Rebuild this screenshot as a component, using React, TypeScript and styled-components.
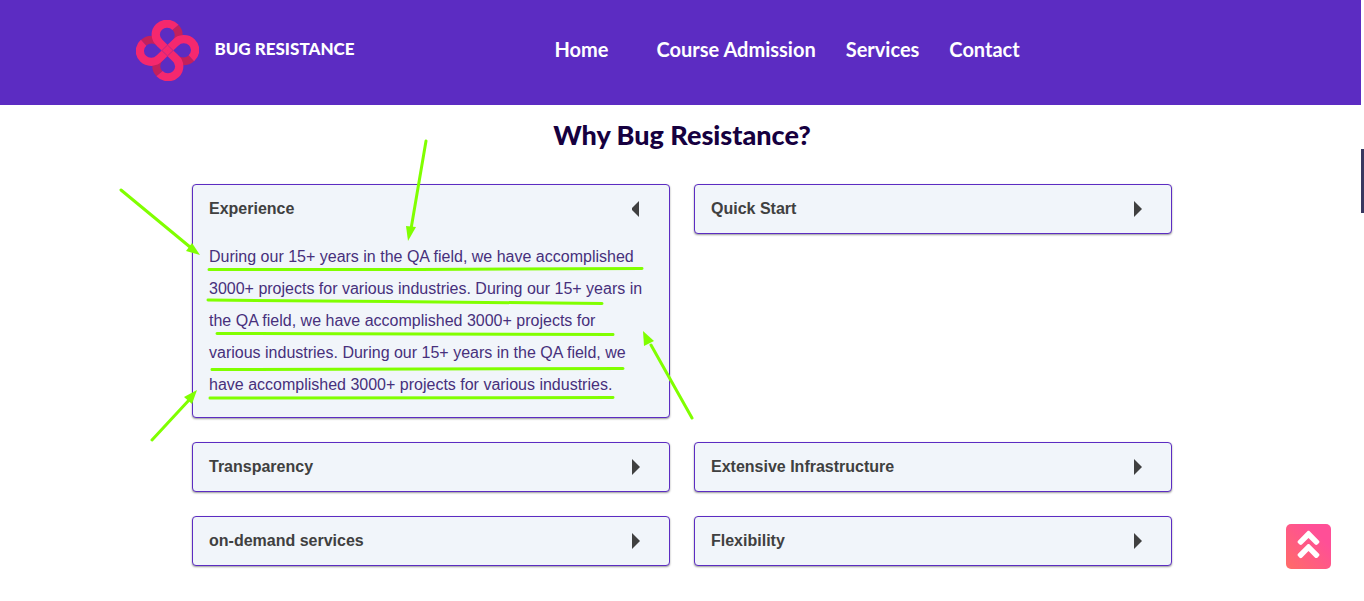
import React, { useState } from "react";
import styled, { createGlobalStyle } from "styled-components";
import { FaAngleDoubleUp } from "react-icons/fa";

const GlobalStyle = createGlobalStyle`
  *, *::before, *::after { box-sizing: border-box; }
  body {
    margin: 0;
    background: #fff;
    font-family: "Liberation Sans", Arial, sans-serif;
  }
`;

const Header = styled.header`
  display: flex;
  align-items: center;
  height: 105px;
  padding: 0 10% 4px;
  background: #5c2cc2;
`;

const Brand = styled.a`
  display: flex;
  align-items: center;
  gap: 15px;
  color: #fff;
  font: 900 17px/24px Lato, sans-serif;
  text-decoration: none;
  white-space: nowrap;
`;

const BrandName = styled.span`
  padding-bottom: 4px;
`;

const Nav = styled.nav`
  display: flex;
  gap: 30px;
  margin-left: 200px;
  padding-bottom: 4px;
`;

const NavLink = styled.a<{ $wide?: boolean }>`
  margin-right: ${(p) => (p.$wide ? "18px" : "0")};
  color: #fff;
  font: 700 20px/28px Lato, sans-serif;
  text-decoration: none;
  white-space: nowrap;
`;

const Main = styled.main`
  max-width: 980px;
  margin: 0 auto;
  padding: 14px 0 32px;
`;

const Title = styled.h1`
  margin: 0 0 33px;
  color: #16003f;
  font: 900 27px/32px Lato, sans-serif;
  text-align: center;
`;

const Grid = styled.section`
  position: relative;
  display: grid;
  grid-template-columns: 1fr 1fr;
  align-items: start;
  gap: 24px;
`;

const Card = styled.article`
  border: 1px solid #5c2cc2;
  border-radius: 4px;
  background: #f1f5fa;
  box-shadow: 0 1px 2px rgba(0, 0, 0, 0.4);
`;

const CardButton = styled.button`
  display: flex;
  align-items: center;
  justify-content: space-between;
  width: 100%;
  height: 48px;
  padding: 0 29px 0 16px;
  border: 0;
  background: none;
  color: #404040;
  font: 700 16px/24px "Liberation Sans", Arial, sans-serif;
  text-align: left;
  cursor: pointer;
`;

const CardBody = styled.p`
  margin: 0;
  padding: 8px 24px 16px 16px;
  color: #47307c;
  font-size: 16px;
  line-height: 32px;
`;

const Marks = styled.svg`
  position: absolute;
  top: 0;
  left: 0;
  overflow: visible;
  pointer-events: none;
`;

const TopButton = styled.button`
  position: fixed;
  right: 33px;
  bottom: 32px;
  display: flex;
  align-items: center;
  justify-content: center;
  width: 45px;
  height: 45px;
  padding: 0 0 4px;
  border: 0;
  border-radius: 5px;
  background: linear-gradient(45deg, #ff6c67, #ff4f97 75%);
  color: #fff;
  cursor: pointer;
`;

const ScrollTrack = styled.div`
  position: fixed;
  inset: 0 0 0 auto;
  width: 3px;
  padding-top: 149px;
  background: #fff;
`;

const ScrollThumb = styled.div`
  height: 64px;
  background: #383860;
`;

const Logo = () => (
  <svg width="63" height="61" viewBox="-95 -95 190 190" preserveAspectRatio="none" fill="none" aria-hidden="true">
    {[0, 90, 180, 270].map((a) => (
      <path key={a} transform={`rotate(${a})`} d="M24-72A34 34 0 0 1 24-24" stroke="#c3205c" strokeWidth="24" />
    ))}
    {[0, 90, 180, 270].map((a) => (
      <path key={a} transform={`rotate(${a})`} d="M0 0L-24-24A34 34 0 1 1 24-72" stroke="#f5286e" strokeWidth="25" />
    ))}
    <rect x="-12" y="-12" width="24" height="24" transform="rotate(45)" stroke="#9c2a92" strokeWidth="2" />
  </svg>
);

const Caret = ({ open }: { open: boolean }) => (
  <svg width="8" height="16" viewBox="0 0 8 16" fill="#404040" aria-hidden="true">
    <path d={open ? "M7 0L-1 8l8 8z" : "M0 0l8 8-8 8z"} />
  </svg>
);

const Annotations = () => (
  <Marks width="1" height="1" aria-hidden="true">
    <g transform="translate(-192 -184)" fill="none" stroke="#80ff00" strokeWidth="3" strokeLinecap="round">
      <path d="M209 269.500L420 269.500 642 268.500" />
      <path d="M208 300L390 301.500 602 303.500" />
      <path d="M217 333.500L613 334.500" />
      <path d="M212 369.500L420 369 623 368.500" />
      <path d="M210 398L613 397.500" />
      <path d="M121 190L190 247M426 141L411 229M152 440L190 399M692 418L651 345" />
      <g fill="#80ff00" stroke="none">
        <path d="M200 255L186 251 192 243z" />
        <path d="M408 241L406 226 416 227z" />
        <path d="M197 390L192 404 184 397z" />
        <path d="M643 331L654 341 644 346z" />
      </g>
    </g>
  </Marks>
);

const experience =
  "During our 15+ years in the QA field, we have accomplished 3000+ projects for various industries. ";

const items: { title: string; body?: string }[] = [
  { title: "Experience", body: experience.repeat(3).trim() },
  { title: "Quick Start" },
  { title: "Transparency" },
  { title: "Extensive Infrastructure" },
  { title: "on-demand services" },
  { title: "Flexibility" },
];

export default function App() {
  const [openTitle, setOpenTitle] = useState("Experience");
  return (
    <>
      <GlobalStyle />
      <Header>
        <Brand href="#">
          <Logo />
          <BrandName>BUG RESISTANCE</BrandName>
        </Brand>
        <Nav>
          <NavLink href="#" $wide>Home</NavLink>
          <NavLink href="#">Course Admission</NavLink>
          <NavLink href="#">Services</NavLink>
          <NavLink href="#">Contact</NavLink>
        </Nav>
      </Header>
      <Main>
        <Title>Why Bug Resistance?</Title>
        <Grid>
          {items.map(({ title, body }) => {
            const open = title === openTitle;
            return (
              <Card key={title}>
                <CardButton aria-expanded={open} onClick={() => setOpenTitle(open ? "" : title)}>
                  {title}
                  <Caret open={open} />
                </CardButton>
                {open && body && <CardBody>{body}</CardBody>}
              </Card>
            );
          })}
          <Annotations />
        </Grid>
      </Main>
      <TopButton aria-label="Back to top">
        <FaAngleDoubleUp size={35} />
      </TopButton>
      <ScrollTrack>
        <ScrollThumb />
      </ScrollTrack>
    </>
  );
}
